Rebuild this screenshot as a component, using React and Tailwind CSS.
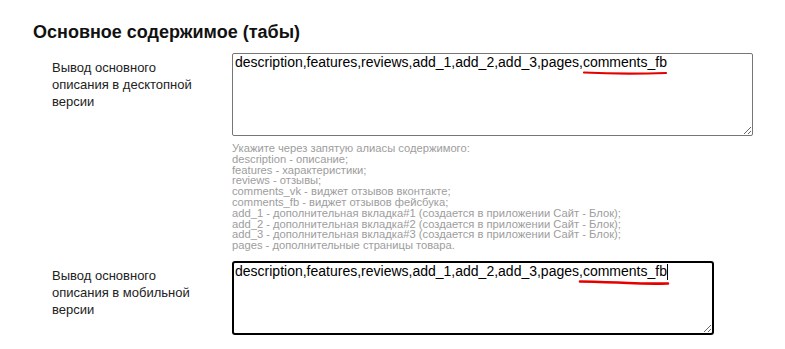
import React from "react";

const TEXT = "description,features,reviews,add_1,add_2,add_3,pages,comments_fb";

const HELP = [
  "Укажите через запятую алиасы содержимого:",
  "description - описание;",
  "features - характеристики;",
  "reviews - отзывы;",
  "comments_vk - виджет отзывов вконтакте;",
  "comments_fb - виджет отзывов фейсбука;",
  "add_1 - дополнительная вкладка#1 (создается в приложении Сайт - Блок);",
  "add_2 - дополнительная вкладка#2 (создается в приложении Сайт - Блок);",
  "add_3 - дополнительная вкладка#3 (создается в приложении Сайт - Блок);",
  "pages - дополнительные страницы товара.",
];

export default function App() {
  return (
    <div className="min-h-[349px] bg-white pl-[33px] pt-[21px] font-['Liberation_Sans',Arial,sans-serif]">
      <h2 className="text-[18px] font-bold leading-[22px] text-[#111]">Основное содержимое (табы)</h2>

      <div className="mt-[10px] flex">
        <div className="ml-[19px] w-[180px] pt-[6px] text-[13px] leading-[17px] text-[#222]">
          Вывод основного<br />описания в десктопной<br />версии
        </div>
        <div className="flex flex-col">
          <div className="relative">
            <textarea
              readOnly
              defaultValue={TEXT}
              spellCheck={false}
              className="block h-[83px] w-[521px] resize rounded-[2px] border border-[#767676] bg-white px-[2px] pt-0 text-[14px] leading-[16px] text-black outline-none"
            />
            <svg className="pointer-events-none absolute left-[350px] top-[17px]" width="86" height="6" viewBox="0 0 86 6">
              <path d="M2 2.5 Q 40 4.5 84 3" stroke="#e50000" strokeWidth="2.2" fill="none" strokeLinecap="round" />
            </svg>
          </div>
          <div className="mt-[7px] text-[11.2px] leading-[10.8px] text-[#9d9d9d]">
            {HELP.map((l) => (
              <div key={l}>{l}</div>
            ))}
          </div>
        </div>
      </div>

      <div className="mt-[10px] flex">
        <div className="ml-[19px] w-[180px] pt-[6px] text-[13px] leading-[17px] text-[#222]">
          Вывод основного<br />описания в мобильной<br />версии
        </div>
        <div className="relative">
          <textarea
            readOnly
            defaultValue={TEXT}
            spellCheck={false}
            className="block h-[74px] w-[482px] resize rounded-[3px] border-2 border-black bg-white px-[1px] pt-0 text-[14px] leading-[16px] text-black outline-none"
          />
          <svg className="pointer-events-none absolute left-[346px] top-[18px]" width="92" height="7" viewBox="0 0 92 7">
            <path d="M2 2.5 Q 30 3 50 4 T 90 4.5" stroke="#e50000" strokeWidth="2.6" fill="none" strokeLinecap="round" />
          </svg>
          <div className="pointer-events-none absolute left-[435px] top-[3px] h-[16px] w-px bg-black" />
        </div>
      </div>
    </div>
  );
}
